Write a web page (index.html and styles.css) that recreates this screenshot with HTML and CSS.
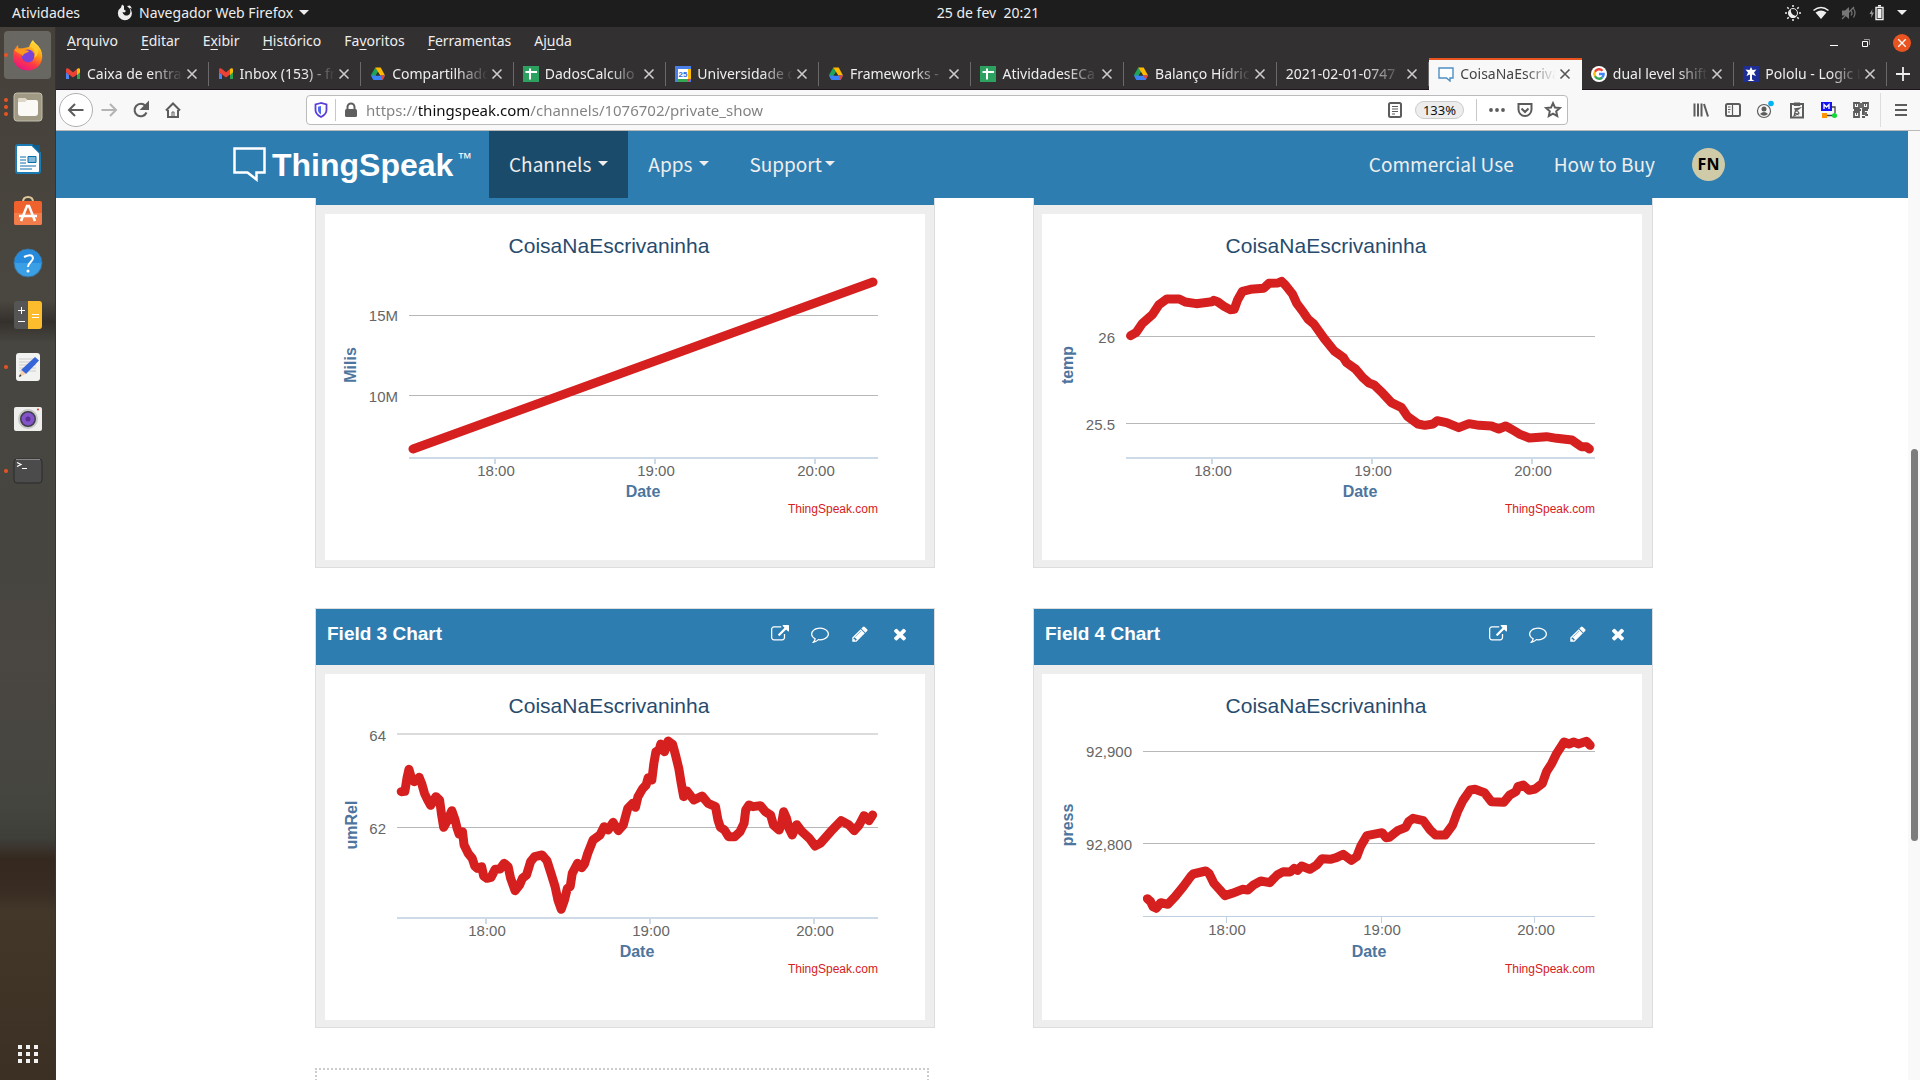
FILE: index.html
```html
<!DOCTYPE html>
<html lang="pt-BR">
<head>
<meta charset="utf-8">
<title>CoisaNaEscrivaninha - ThingSpeak IoT</title>
<link rel="stylesheet" href="styles.css">
</head>
<body>
<svg class="sprite" aria-hidden="true">
  <symbol id="gmail" viewBox="0 0 16 16"><path d="M1 3v10h3V6z" fill="#4d84f0"/><path d="M15 3v10h-3V6z" fill="#2fa24f"/><path d="M1 3.500 4 6v3L1 6z" fill="#c5221f"/><path d="M15 3.500 12 6v3l3-3z" fill="#fbbc04"/><path d="M1 3.500C1 2 3 1.800 4 3l4 3.200L12 3v5.500l-4 3-4-3L1 6z" fill="#ea4335"/><path d="M12 3c1-1.200 3-1 3 .6V6l-3 2.500z" fill="#fbbc04"/></symbol>
  <symbol id="drive" viewBox="0 0 16 16"><path d="M5.300 1.500 1 9l2.200 4.500L8 6z" fill="#1ea55b"/><path d="M5.300 1.500h5.400L15 9.500h-5z" fill="#ffba00"/><path d="M1 9.500h14l-2.400 4.500H3.300z" fill="#3b82f6"/><path d="M10.500 9.500H15l-2.400 4.500z" fill="#ea4335"/><path d="M8 6l2.200 3.500H5.800z" fill="#323031"/></symbol>
  <symbol id="sheet" viewBox="0 0 16 16"><path d="M0 0h16v16H0z" fill="#2da160"/><path d="M7 2.500v11M2.500 6H14" stroke="#fff" stroke-width="2"/></symbol>
  <symbol id="close" viewBox="0 0 12 12"><path d="M1.500 1.500l9 9m0-9l-9 9" stroke="currentColor" stroke-width="1.600" fill="none"/></symbol>
  <symbol id="external" viewBox="0 0 1792 1792"><path fill="currentColor" d="M1408 928v320q0 119-84.500 203.500t-203.500 84.500h-832q-119 0-203.500-84.500t-84.500-203.500v-832q0-119 84.500-203.500t203.500-84.500h704q14 0 23 9t9 23v64q0 14-9 23t-23 9h-704q-66 0-113 47t-47 113v832q0 66 47 113t113 47h832q66 0 113-47t47-113v-320q0-14 9-23t23-9h64q14 0 23 9t9 23zm384-864v512q0 26-19 45t-45 19-45-19l-176-176-652 652q-10 10-23 10t-23-10l-114-114q-10-10-10-23t10-23l652-652-176-176q-19-19-19-45t19-45 45-19h512q26 0 45 19t19 45z"/></symbol>
  <symbol id="comment" viewBox="0 0 1792 1792"><path fill="currentColor" d="M896 384q-204 0-381.500 69.500t-282 187.500-104.500 255q0 112 71.500 213.500t201.500 175.500l87 50-27 96q-24 91-70 172 152-63 275-171l43-38 57 6q69 8 130 8 204 0 381.500-69.500t282-187.500 104.500-255-104.500-255-282-187.500-381.500-69.500zm896 512q0 174-120 321.500t-326 233-450 85.500q-70 0-145-8-198 175-460 242-49 14-114 22h-5q-15 0-27-10.500t-16-27.500v-1q-3-4-.5-12t2-10 4.500-9.500l6-9 7-8.500 8-9q7-8 31-34.500t34.500-38 31-39.500 32.500-51 27-59 26-76q-157-89-247.500-220t-90.500-281q0-130 71-248.500t191-204.500 286-136.500 348-50.500q244 0 450 85.500t326 233 120 321.500z"/></symbol>
  <symbol id="pencil" viewBox="0 0 1792 1792"><path fill="currentColor" d="M491 1536l91-91-235-235-91 91v107h128v128h107zm523-928q0-22-22-22-10 0-17 7l-542 542q-7 7-7 17 0 22 22 22 10 0 17-7l542-542q7-7 7-17zm-54-192l416 416-832 832h-416v-416zm683 96q0 53-37 90l-166 166-416-416 166-165q36-38 90-38 53 0 91 38l235 234q37 39 37 91z"/></symbol>
  <symbol id="times" viewBox="0 0 1792 1792"><path fill="currentColor" d="M1490 1322q0 40-28 68l-136 136q-28 28-68 28t-68-28l-294-294-294 294q-28 28-68 28t-68-28l-136-136q-28-28-28-68t28-68l294-294-294-294q-28-28-28-68t28-68l136-136q28-28 68-28t68 28l294 294 294-294q28-28 68-28t68 28l136 136q28 28 28 68t-28 68l-294 294 294 294q28 28 28 68z"/></symbol>
</svg>

<header class="topbar">
  <div class="topbar-left">
    <button class="plain">Atividades</button>
    <button class="plain app-menu">
      <svg width="16" height="18" viewBox="0 0 16 18"><path d="M4 3.500A7 7 0 1 0 12.500 4l2.500.5-2-3-3 .5 1.500 1.500c2.500 2 2.500 6 0 7.500a4 4 0 0 1-6-3l2 .500 1.500-1.500-2-1.500L7 2 5 .5z" fill="#eee"/></svg>
      <span>Navegador Web Firefox</span><i class="caret"></i>
    </button>
  </div>
  <time class="clock">25 de fev&nbsp; 20:21</time>
  <div class="tray">
    <svg width="16" height="16" viewBox="0 0 16 16" stroke="#eee" stroke-width="1.500"><path d="M8 0v2M8 14v2M0 8h2M14 8h2M2.300 2.300l1.400 1.400M12.300 12.300l1.400 1.400M2.300 13.700l1.400-1.400M12.300 3.700l1.400-1.400"/><circle cx="8" cy="8" r="4.500" fill="none" stroke-width="1"/><path d="M6 4.500a5 5 0 0 0 6 6A4.500 4.500 0 1 1 6 4.500z" fill="#eee" stroke="none"/></svg>
    <svg width="16" height="16" viewBox="0 0 16 16"><path d="M.5 5.500Q8-.5 15.500 5.500" fill="none" stroke="#eee" stroke-width="1.600"/><path d="M2.500 7.500Q8 3.500 13.500 7.500L8 14z" fill="#eee"/></svg>
    <svg width="16" height="16" viewBox="0 0 16 16"><path d="M1 5.500h3L8 2v12l-4-3.500H1z" fill="#777"/><path d="M1 14 13 2M10 5.500q2 2.500 0 5M12.500 3.500q3 4.500 0 9" stroke="#777" fill="none" stroke-width="1.200"/></svg>
    <svg width="16" height="16" viewBox="0 0 16 16"><path d="M3.500 4 .5 9h2l-.5 4L5 7.500H3z" fill="#999"/><path d="M7 2.500h7v12H7zM9 .8h3" fill="none" stroke="#eee" stroke-width="1.400"/><path d="M8.500 4h4v9h-4z" fill="#eee"/></svg>
    <i class="caret"></i>
  </div>
</header>

<div class="desktop">
  <nav class="dock" aria-label="Dock">
    <button class="dock-item active" aria-label="Firefox"><i class="dots"><b></b></i>
      <svg width="32" height="32" viewBox="0 0 32 32"><defs><linearGradient id="fx" x1=".8" y1="0" x2=".3" y2="1"><stop offset="0" stop-color="#fff44f"/><stop offset=".4" stop-color="#ff980e"/><stop offset=".7" stop-color="#ff3647"/><stop offset="1" stop-color="#e31587"/></linearGradient></defs><path d="M21 1c1 3 5 4 8 10 4 10-2 20-12 20.500C8 32 1 26 1 17c0-5 2-8 5-11l.5 4L12 9l5-1c1-3 2-5 4-7z" fill="url(#fx)"/><circle cx="16" cy="17" r="6.500" fill="#7a42d8"/><path d="M2 11c5-4 9 0 15 1-2 3-5 1-6 5-4-3-5-3-9-6z" fill="#ff9a1f"/><path d="M18 7c5 3 6 8 4 12 4-2 5-7 3-11-2-3-5-3-7-1z" fill="#ffcb2e"/></svg></button>
    <button class="dock-item" aria-label="Arquivos"><i class="dots"><b></b><b></b><b></b></i>
      <svg width="30" height="30" viewBox="0 0 30 30"><rect x="1" y="1" width="28" height="28" rx="3" fill="#a09a85" stroke="#c3beac"/><path d="M5 8q0-2 2-2h5l2 2h9q2 0 2 2v11q0 3-3 3H8q-3 0-3-3z" fill="#fbf9f6"/><path d="M5 8q0-2 2-2h5l2 2-2 2H5z" fill="#ddd6c6"/></svg></button>
    <button class="dock-item" aria-label="LibreOffice Writer">
      <svg width="26" height="30" viewBox="0 0 26 30"><path d="M3 1h14l8 8v18q0 2-2 2H3q-2 0-2-2V3q0-2 2-2z" fill="#fff" stroke="#1b7cb3" stroke-width="2"/><path d="M17 1h8v8z" fill="#0e5f90"/><path d="M5 13h6M5 16h6M5 19h6M5 22h16M5 25h12" stroke="#0a6fa8"/><path d="M13 12.500h8v6h-8z" fill="#7fb8d8" stroke="#0a6fa8"/></svg></button>
    <button class="dock-item" aria-label="Ubuntu Software">
      <svg width="30" height="30" viewBox="0 0 30 30"><path d="M10 6q0-5 5-5t5 5" fill="none" stroke="#e0c69a" stroke-width="2"/><rect x="1" y="5" width="28" height="24" rx="2" fill="#f0622d"/><path d="M1 17h28v10q0 2-2 2H3q-2 0-2-2z" fill="#f37c4b"/><path d="M8 25l6-15h2l6 15M6 20h18" fill="none" stroke="#fff" stroke-width="2.500"/></svg></button>
    <button class="dock-item" aria-label="Ajuda">
      <svg width="30" height="30" viewBox="0 0 30 30"><circle cx="15" cy="15" r="14" fill="#3b9fe6" stroke="#3a6c91"/><path d="M1.500 15a13.500 13.500 0 0 1 27 0z" fill="#268bdc"/><path d="M11 9q8-4 9 1c0 4-5 4-5 9" fill="none" stroke="#fff" stroke-width="2"/><circle cx="15" cy="23" r="1.500" fill="#fff"/></svg></button>
    <button class="dock-item" aria-label="Calculadora">
      <svg width="30" height="30" viewBox="0 0 30 30"><rect x="1" y="1" width="28" height="28" rx="3" fill="#555"/><path d="M15 1h11q3 0 3 3v22q0 3-3 3H15z" fill="#fdbc2c"/><path d="M5 10.500h7M8.500 7v7M5 21.500h7M19 14.500h7M19 17.500h7" stroke="#fff"/></svg></button>
    <button class="dock-item" aria-label="Editor de texto"><i class="dots"><b></b></i>
      <svg width="28" height="30" viewBox="0 0 28 30"><rect x="2" y="1" width="24" height="28" rx="3" fill="#f2f2f0"/><path d="M5 7h17M5 10h17M5 13h17M5 16h17M5 19h17" stroke="#ccc"/><path d="M21 5l4 3.500L12 22l-5-4z" fill="#3565d8"/><path d="M7.500 18 12 22l-7 3z" fill="#f6cfae"/><path d="M5 25l2.500-1L6 22z" fill="#333"/></svg></button>
    <button class="dock-item" aria-label="Câmera">
      <svg width="30" height="26" viewBox="0 0 30 26"><rect x="1" y="1" width="28" height="24" rx="2" fill="#eeeeec"/><circle cx="15" cy="13" r="9" fill="#3e3e4a" stroke="#c8c8c8" stroke-width="2"/><circle cx="15" cy="13" r="6.500" fill="#8254c8"/><circle cx="15" cy="13" r="2.500" fill="#5c2f97"/><circle cx="25" cy="3.500" r="1" fill="#d33"/></svg></button>
    <button class="dock-item" aria-label="Terminal"><i class="dots"><b></b></i>
      <svg width="30" height="26" viewBox="0 0 30 26"><rect x="1" y="1" width="28" height="24" rx="3" fill="#4b4b4b" stroke="#2b2b2b"/><path d="M3 1.500h24" stroke="#888"/><path d="M4 4.500l4 2-4 2M9 10.500h5" fill="none" stroke="#fff" stroke-width="1.200"/></svg></button>
    <button class="dock-item apps" aria-label="Mostrar aplicativos">
      <svg width="22" height="22" viewBox="0 0 22 22" fill="#f2f2f2"><path d="M1 2h4v4H1zM9 2h4v4H9zM17 2h4v4h-4zM1 9h4v4H1zM9 9h4v4H9zM17 9h4v4h-4zM1 16h4v4H1zM9 16h4v4H9zM17 16h4v4h-4z"/></svg></button>
  </nav>

  <div class="window">
    <div class="menubar">
      <nav class="menus">
        <button class="plain"><u>A</u>rquivo</button><button class="plain"><u>E</u>ditar</button><button class="plain">E<u>x</u>ibir</button><button class="plain"><u>H</u>istórico</button><button class="plain">Fa<u>v</u>oritos</button><button class="plain"><u>F</u>erramentas</button><button class="plain">Aj<u>u</u>da</button>
      </nav>
      <div class="win-buttons">
        <button class="plain" aria-label="Minimizar"><svg width="10" height="10" viewBox="0 0 10 10"><path d="M1 7.500h8" stroke="#fff"/></svg></button>
        <button class="plain" aria-label="Restaurar"><svg width="10" height="10" viewBox="0 0 10 10"><path d="M1.500 3.500h5v5h-5z" fill="none" stroke="#fff"/><path d="M3 1.500h5.500V7" fill="none" stroke="#999"/></svg></button>
        <button class="plain win-close" aria-label="Fechar"><svg width="10" height="10"><use href="#close"/></svg></button>
      </div>
    </div>

    <div class="tabs">
      <div class="tab"><svg class="fav"><use href="#gmail"/></svg><a href="#">Caixa de entrada</a><button class="tab-x" aria-label="Fechar aba"><svg><use href="#close"/></svg></button></div>
      <div class="tab"><svg class="fav"><use href="#gmail"/></svg><a href="#">Inbox (153) - fn</a><button class="tab-x" aria-label="Fechar aba"><svg><use href="#close"/></svg></button></div>
      <div class="tab"><svg class="fav"><use href="#drive"/></svg><a href="#">Compartilhados</a><button class="tab-x" aria-label="Fechar aba"><svg><use href="#close"/></svg></button></div>
      <div class="tab"><svg class="fav"><use href="#sheet"/></svg><a href="#">DadosCalculo</a><button class="tab-x" aria-label="Fechar aba"><svg><use href="#close"/></svg></button></div>
      <div class="tab"><svg class="fav" viewBox="0 0 16 16"><path d="M0 0h16v16H0z" fill="#4a7fe8"/><path d="M13 3h3v10h-3z" fill="#fbbc04"/><path d="M3 13h10v3H3z" fill="#34a853"/><path d="M13 13h3l-3 3z" fill="#ea4335"/><path d="M3 3h10v10H3z" fill="#fff"/><text x="8" y="11" class="fav-day">25</text></svg><a href="#">Universidade d</a><button class="tab-x" aria-label="Fechar aba"><svg><use href="#close"/></svg></button></div>
      <div class="tab"><svg class="fav"><use href="#drive"/></svg><a href="#">Frameworks - </a><button class="tab-x" aria-label="Fechar aba"><svg><use href="#close"/></svg></button></div>
      <div class="tab"><svg class="fav"><use href="#sheet"/></svg><a href="#">AtividadesECa</a><button class="tab-x" aria-label="Fechar aba"><svg><use href="#close"/></svg></button></div>
      <div class="tab"><svg class="fav"><use href="#drive"/></svg><a href="#">Balanço Hídrico</a><button class="tab-x" aria-label="Fechar aba"><svg><use href="#close"/></svg></button></div>
      <div class="tab"><a href="#">2021-02-01-0747</a><button class="tab-x" aria-label="Fechar aba"><svg><use href="#close"/></svg></button></div>
      <div class="tab current"><svg class="fav" viewBox="0 0 16 16"><path d="M1 2h14v10h-3v3L8.500 12H1z" fill="#fff" stroke="#4f8fc4" stroke-width="1.400"/></svg><a href="#">CoisaNaEscrivaninha</a><button class="tab-x" aria-label="Fechar aba"><svg><use href="#close"/></svg></button></div>
      <div class="tab"><svg class="fav" viewBox="0 0 16 16" fill="none" stroke-width="2.400"><circle cx="8" cy="8" r="8" fill="#fff"/><path d="M11.500 4.700A4.600 4.600 0 0 0 4 5.700" stroke="#ea4335"/><path d="M4 5.700a4.600 4.600 0 0 0 0 4.600" stroke="#fbbc04"/><path d="M4 10.300a4.600 4.600 0 0 0 7.200 1.200" stroke="#34a853"/><path d="M11.200 11.500A4.600 4.600 0 0 0 12.600 8H8" stroke="#4285f4"/></svg><a href="#">dual level shifter</a><button class="tab-x" aria-label="Fechar aba"><svg><use href="#close"/></svg></button></div>
      <div class="tab"><svg class="fav" viewBox="0 0 16 16"><path d="M0 0h16v16H0z" fill="#1f2e94"/><path d="M8 1l1.500 3 4-.5-2.500 3 2 3.500-4-1.500v5l2.500 1.500h-7L7 13.500V8.500L3.500 10l1.500-3.500-2.500-3 4 .500z" fill="#fff"/></svg><a href="#">Pololu - Logic L</a><button class="tab-x" aria-label="Fechar aba"><svg><use href="#close"/></svg></button></div>
      <button class="plain new-tab" aria-label="Nova aba"><svg width="16" height="16" viewBox="0 0 16 16"><path d="M8 1v14M1 8h14" stroke="#eee" stroke-width="1.800"/></svg></button>
    </div>

    <div class="toolbar">
      <button class="tool back" aria-label="Voltar"><svg viewBox="0 0 16 16"><path d="M15.500 8H1M7 2 1 8l6 6"/></svg></button>
      <button class="tool off" aria-label="Avançar"><svg viewBox="0 0 16 16"><path d="M.5 8H15M9 2l6 6-6 6"/></svg></button>
      <button class="tool" aria-label="Recarregar"><svg viewBox="0 0 16 16"><path d="M13.500 10.500A6.200 6.200 0 1 1 12.500 4l1.500 2"/><path d="M15 1v6H9z" class="fill"/></svg></button>
      <button class="tool" aria-label="Início"><svg viewBox="0 0 16 16"><path d="M1 8.500 8 1.500l7 7M3 8v7h10V8"/><path d="M7 10h2v5H7z" stroke-width="1"/></svg></button>

      <form class="urlbar">
        <svg class="u-shield" width="16" height="16" viewBox="0 0 16 16"><path d="M8 1 2.500 2.500V8c0 3 2.500 5.500 5.500 7 3-1.500 5.500-4 5.500-7V2.500z" fill="none" stroke="#5a3fd6" stroke-width="1.800"/><path d="M8 4l-3 .8V8c0 2 1.500 3.500 3 4.500z" fill="#4f6bf0"/></svg>
        <i class="sep"></i>
        <svg class="u-lock" width="16" height="16" viewBox="0 0 16 16"><rect x="2" y="7" width="12" height="8" rx="1.500" fill="#5f5f60"/><path d="M4.500 8V5a3.500 3.500 0 0 1 7 0v3" fill="none" stroke="#5f5f60" stroke-width="2"/></svg>
        <input type="text" class="url" aria-label="Endereço" value="https://thingspeak.com/channels/1076702/private_show">
        <button type="button" class="tool" aria-label="Modo de leitura"><svg viewBox="0 0 16 16"><rect x="2" y="1" width="12" height="14" rx="1.500"/><path d="M5 4.500h6M5 7h6M5 9.500h6M5 12h3" stroke-width="1"/></svg></button>
        <button type="button" class="zoom">133%</button>
        <i class="sep"></i>
        <button type="button" class="tool" aria-label="Mais"><svg viewBox="0 0 16 16"><g class="fill" stroke="none"><circle cx="2" cy="8" r="1.900"/><circle cx="8" cy="8" r="1.900"/><circle cx="14" cy="8" r="1.900"/></g></svg></button>
        <button type="button" class="tool" aria-label="Pocket"><svg viewBox="0 0 16 16"><path d="M1.500 2h13v5.500a6.500 6.500 0 0 1-13 0zM4.500 6.500 8 10l3.500-3.500"/></svg></button>
        <button type="button" class="tool" aria-label="Favoritar"><svg viewBox="0 0 16 16"><path d="M8 1.200l2 4.400 4.800.5-3.600 3.200 1 4.800L8 11.700l-4.200 2.400 1-4.800L1.200 6.100 6 5.600z"/></svg></button>
      </form>

      <div class="tools-right">
        <button class="tool" aria-label="Biblioteca"><svg viewBox="0 0 16 16"><path d="M1.500 1.500v13M5 1.500v13M8.500 1.500v13M11 2l4 12.500"/></svg></button>
        <button class="tool" aria-label="Painéis"><svg viewBox="0 0 16 16"><rect x="1" y="2" width="14" height="12" rx="1.500"/><path d="M7.500 2v12M3 5h2.500M3 7.500h2.500M3 10h2" stroke-width="1.200"/></svg></button>
        <button class="tool" aria-label="Conta"><svg viewBox="0 0 16 16"><circle cx="7" cy="9" r="6.500" stroke-width="1.200"/><circle cx="7" cy="7" r="2.500" class="fill" stroke="none"/><path d="M3 12q4-4 8 0-4 3.500-8 0z" class="fill" stroke="none"/><circle cx="14" cy="1.500" r="2.800" fill="#00b3f4" stroke="none"/></svg></button>
        <button class="tool" aria-label="Área de transferência"><svg viewBox="0 0 16 16"><rect x="2" y="2" width="12" height="13.500"/><path d="M5 1h6v2.500H5z" class="fill" stroke-width="1"/><path d="M5 7l6-1-5 4 1-3 3 4-5 3 1-3 4 2" stroke-width="1.200"/></svg></button>
        <button class="tool" aria-label="Extensão M"><svg viewBox="0 0 16 16"><path d="M0 0h11v9H0z" fill="#1414f0" stroke="none"/><path d="M3 7V2.500L5.500 5 8 2.500V7" stroke="#fff" stroke-width="1.300"/><path d="M11 5h3v6M6 13.500h7" stroke="#444" stroke-width="1.300"/><path d="M1 11h5v5H1z" fill="#ff9500" stroke="none"/><circle cx="13.500" cy="13.500" r="2.500" fill="#12d834" stroke="none"/></svg></button>
        <button class="tool" aria-label="QR code"><svg viewBox="0 0 16 16"><path d="M1 1h5v5H1zM10 1h5v5h-5zM1 10h5v5H1zM8 1v5M8 8H1M9 8h6M9 10h2v2H9M13 10v3h2M9 15h3M3 3h1M12 3h1M3 12h1" stroke-width="1.800"/></svg></button>
        <i class="sep tall"></i>
        <button class="tool" aria-label="Menu"><svg viewBox="0 0 16 16"><path d="M2 3h12M2 8h12M2 13h12"/></svg></button>
      </div>
    </div>

    <div class="page">
      <div class="viewport">
        <header class="navbar">
          <div class="container nav-row">
            <a class="brand" href="#" aria-label="ThingSpeak">
              <svg width="33" height="35" viewBox="0 0 33 35"><path d="M1.500 1.500h30v24h-8v7l-9-7h-13z" fill="none" stroke="#fff" stroke-width="2.500"/></svg>
              <span>ThingSpeak</span><sup>™</sup>
            </a>
            <nav class="links">
              <a href="#" class="on">Channels <i class="caret"></i></a>
              <a href="#">Apps <i class="caret"></i></a>
              <a href="#" class="tight">Support<i class="caret"></i></a>
            </nav>
            <nav class="links right">
              <a href="#">Commercial Use</a>
              <a href="#">How to Buy</a>
            </nav>
            <button class="avatar">FN</button>
          </div>
        </header>

        <main class="container grid">
          <section class="panel">
            <header><h2></h2></header>
            <div class="body">
              <svg class="chart" viewBox="0 0 600 346" role="img" aria-label="Milis">
                <path class="gridline" d="M84 101.500h469M84 181.500h469"/>
                <path class="axis" d="M84 244h469M170 244v6M330 244v6M490 244v6"/>
                <path class="series" d="M88 235 548 68"/>
                <text class="title" x="284" y="39">CoisaNaEscrivaninha</text>
                <g class="ylab"><text x="73" y="107">15M</text><text x="73" y="188">10M</text></g>
                <g class="xlab"><text x="171" y="262">18:00</text><text x="331" y="262">19:00</text><text x="491" y="262">20:00</text></g>
                <text class="name" x="318" y="283">Date</text>
                <text class="name" transform="translate(31 151) rotate(-90)">Milis</text>
                <text class="credit" x="553" y="299">ThingSpeak.com</text>
              </svg>
            </div>
          </section>

          <section class="panel">
            <header><h2></h2></header>
            <div class="body">
              <svg class="chart" viewBox="0 0 600 346" role="img" aria-label="temp">
                <path class="gridline" d="M84 122.500h469M84 209.500h469"/>
                <path class="axis" d="M84 244h469M170 244v6M330 244v6M490 244v6"/>
                <polyline class="series" transform="translate(-22 -24) scale(.40816 .33333)" points="271,437 285,427 300,400 325,373 340,345 360,327 390,327 405,336 432,341 470,335 475,331 485,336 500,349 515,359 525,358 533,330 545,304 565,298 597,295 610,280 632,279 641,274 650,285 668,313 678,340 695,368 706,388 720,402 745,445 770,483 792,502 800,518 822,537 840,563 855,579 868,585 885,605 910,638 935,653 950,680 975,702 992,706 1012,702 1022,692 1045,698 1075,713 1100,701 1125,706 1155,708 1173,717 1190,708 1210,722 1225,733 1248,744 1290,740 1315,745 1352,750 1375,770 1388,770 1395,777"/>
                <text class="title" x="284" y="39">CoisaNaEscrivaninha</text>
                <g class="ylab"><text x="73" y="129">26</text><text x="73" y="216">25.5</text></g>
                <g class="xlab"><text x="171" y="262">18:00</text><text x="331" y="262">19:00</text><text x="491" y="262">20:00</text></g>
                <text class="name" x="318" y="283">Date</text>
                <text class="name" transform="translate(31 151) rotate(-90)">temp</text>
                <text class="credit" x="553" y="299">ThingSpeak.com</text>
              </svg>
            </div>
          </section>

          <section class="panel">
            <header><h2>Field 3 Chart</h2>
              <div class="actions"><button aria-label="Abrir"><svg><use href="#external"/></svg></button><button aria-label="Comentar"><svg><use href="#comment"/></svg></button><button aria-label="Editar"><svg><use href="#pencil"/></svg></button><button aria-label="Remover"><svg><use href="#times"/></svg></button></div>
            </header>
            <div class="body">
              <svg class="chart" viewBox="0 0 600 346" role="img" aria-label="umRel">
                <path class="gridline" d="M72 60h481M72 153.500h481"/>
                <path class="axis" d="M72 244h481M161 244v6M325 244v6M489 244v6"/>
                <polyline class="series" transform="translate(-25 -84) scale(.40816 .33333)" points="248,605 257,604 262,565 267,538 272,560 280,575 292,562 298,580 305,610 312,628 320,646 333,620 342,630 347,675 352,712 362,690 372,662 380,690 385,715 390,733 398,725 402,765 412,790 422,805 428,828 434,835 445,830 450,858 458,865 468,862 478,838 490,837 500,820 510,830 516,865 527,902 538,885 545,865 555,855 565,815 575,800 593,795 605,812 615,850 625,890 632,930 640,958 648,930 655,895 662,890 667,850 680,820 690,833 697,822 705,790 718,750 735,735 745,710 755,720 767,697 780,722 792,705 803,655 815,640 822,652 828,620 840,595 848,585 853,563 862,570 867,520 872,485 880,480 884,462 893,485 902,453 913,463 920,495 928,535 934,580 940,620 948,603 965,630 985,618 1000,640 1018,650 1024,690 1030,712 1040,720 1050,740 1065,740 1078,725 1088,700 1092,660 1100,645 1110,650 1128,647 1140,665 1153,675 1160,705 1174,720 1180,700 1185,665 1192,685 1198,715 1206,735 1217,704 1230,725 1248,745 1262,768 1275,760 1300,725 1326,692 1345,705 1358,722 1370,705 1382,677 1394,692 1403,675"/>
                <text class="title" x="284" y="39">CoisaNaEscrivaninha</text>
                <g class="ylab"><text x="61" y="67">64</text><text x="61" y="160">62</text></g>
                <g class="xlab"><text x="162" y="262">18:00</text><text x="326" y="262">19:00</text><text x="490" y="262">20:00</text></g>
                <text class="name" x="312" y="283">Date</text>
                <text class="name" transform="translate(32 151) rotate(-90)">umRel</text>
                <text class="credit" x="553" y="299">ThingSpeak.com</text>
              </svg>
            </div>
          </section>

          <section class="panel">
            <header><h2>Field 4 Chart</h2>
              <div class="actions"><button aria-label="Abrir"><svg><use href="#external"/></svg></button><button aria-label="Comentar"><svg><use href="#comment"/></svg></button><button aria-label="Editar"><svg><use href="#pencil"/></svg></button><button aria-label="Remover"><svg><use href="#times"/></svg></button></div>
            </header>
            <div class="body">
              <svg class="chart" viewBox="0 0 600 346" role="img" aria-label="press">
                <path class="gridline" d="M101 77.500h452M101 169.500h452"/>
                <path class="axis thin" d="M101 242.500h452M184.500 243v6M339.500 243v6M492.500 243v6"/>
                <polyline class="series" transform="translate(-22 -84) scale(.40816 .33333)" points="312,926 320,935 326,950 334,955 345,938 362,943 380,920 400,890 418,860 424,852 455,843 463,850 475,880 490,900 502,917 520,910 545,898 558,900 572,885 590,873 612,878 630,855 645,845 662,846 672,835 680,841 690,828 710,838 727,825 740,806 760,808 775,803 792,793 812,811 825,800 835,768 850,737 887,728 897,743 905,742 925,722 945,712 952,695 963,685 988,692 1005,720 1018,735 1042,735 1060,705 1072,665 1085,632 1103,600 1115,598 1138,608 1155,635 1185,637 1200,615 1215,605 1220,590 1233,585 1247,601 1262,597 1280,580 1290,545 1303,520 1315,490 1333,456 1345,462 1357,456 1368,462 1388,454 1397,466"/>
                <text class="title" x="284" y="39">CoisaNaEscrivaninha</text>
                <g class="ylab"><text x="90" y="83">92,900</text><text x="90" y="176">92,800</text></g>
                <g class="xlab"><text x="185" y="261">18:00</text><text x="340" y="261">19:00</text><text x="494" y="261">20:00</text></g>
                <text class="name" x="327" y="283">Date</text>
                <text class="name" transform="translate(31 151) rotate(-90)">press</text>
                <text class="credit" x="553" y="299">ThingSpeak.com</text>
              </svg>
            </div>
          </section>

          <div class="dropzone"></div>
        </main>
      </div>
      <div class="scrollbar"><i class="before"></i><i class="thumb"></i><i class="after"></i></div>
    </div>
  </div>
</div>
</body>
</html>
```
FILE: styles.css
```css
* { box-sizing: border-box; }
body {
  margin: 0;
  height: 100vh;
  display: flex;
  flex-direction: column;
  overflow: hidden;
  font: 14px/20px "Noto Sans", "Open Sans", sans-serif;
  color: #eee;
  background: #fff;
}
.sprite { display: none; }
button { font: inherit; color: inherit; background: none; border: 0; padding: 0; }
a { color: inherit; text-decoration: none; }
svg { display: block; flex: none; }
.caret {
  display: inline-block;
  border: 5px solid transparent;
  border-top-color: currentColor;
  border-bottom: 0;
}

/* Desktop top bar */
.topbar {
  flex: none;
  display: grid;
  grid-template-columns: 1fr auto 1fr;
  align-items: center;
  height: 27px;
  padding: 0 13px 2px 12px;
  background: #1d1d1d;
}
.topbar-left { display: flex; gap: 37px; }
.app-menu { display: flex; align-items: center; gap: 6px; }
.clock { padding-left: 57px; }
.tray { display: flex; justify-content: flex-end; align-items: center; gap: 12px; }

/* Dock */
.desktop { flex: 1; min-height: 0; display: flex; }
.dock {
  flex: none;
  width: 56px;
  display: flex;
  flex-direction: column;
  gap: 4px;
  padding: 4px 4px 2px;
  border-right: 1px solid #353430;
  background: linear-gradient(#45413a 0, #4a4740 26%, #34312d 28%, #484640 30%, #464540 50%, #4a4641 60%, #45453f 74%, #3f3f3a 77%, #35291f 79%, #382c23 82%, #43372a 84%, #3c3024 100%);
}
.dock-item {
  position: relative;
  height: 48px;
  display: flex;
  align-items: center;
  justify-content: center;
}
.dock-item.active { background: #686761; border-radius: 4px; }
.dock-item.apps { margin-top: auto; }
.dots {
  position: absolute;
  left: 0;
  top: 0;
  bottom: 0;
  display: flex;
  flex-direction: column;
  justify-content: center;
  gap: 3px;
}
.dots b { width: 4px; height: 4px; border-radius: 50%; background: #e95420; }

/* Browser window */
.window { flex: 1; min-width: 0; display: flex; flex-direction: column; }
.menubar {
  display: flex;
  justify-content: space-between;
  align-items: center;
  height: 31px;
  padding: 0 9px 0 11px;
  background: #323031;
}
.menus { display: flex; gap: 23px; padding-bottom: 4px; }
.menus u { text-underline-offset: 3px; }
.win-buttons { display: flex; align-items: center; gap: 22px; }
.win-close {
  width: 18px;
  height: 18px;
  border-radius: 50%;
  background: #e95420;
  display: flex;
  align-items: center;
  justify-content: center;
  color: #fff;
}
.tabs {
  display: flex;
  height: 32px;
  background: #323031;
  border-bottom: 1px solid #1e1420;
}
.tab {
  flex: 1 1 0;
  min-width: 0;
  display: flex;
  align-items: center;
  padding: 0 11px 0 9px;
  background: linear-gradient(#6b696a, #6b696a) right 4px / 1px 24px no-repeat;
}
.tab a {
  flex: 1;
  min-width: 0;
  overflow: hidden;
  white-space: nowrap;
  -webkit-mask-image: linear-gradient(90deg, #000 68%, transparent 100%);
  mask-image: linear-gradient(90deg, #000 68%, transparent 100%);
}
.tab-x { margin-left: 3px; color: #ccc; }
.tab-x svg { width: 12px; height: 12px; }
.fav { width: 16px; height: 16px; margin-right: 6px; }
.fav-day { font: bold 8px "Liberation Sans", sans-serif; text-anchor: middle; fill: #3367d6; }
.tab.current {
  margin-bottom: -1px;
  padding-bottom: 3px;
  border-top: 2px solid #e95420;
  background: #f8f8f8;
  color: #444;
}
.tab.current .tab-x { color: #555; }
.new-tab { width: 33px; display: flex; align-items: center; justify-content: center; }

.toolbar {
  display: flex;
  align-items: center;
  height: 41px;
  padding: 0 3px;
  background: #f8f8f8;
  border-bottom: 1px solid #b9b9b9;
}
.tool { width: 32px; height: 32px; display: flex; align-items: center; justify-content: center; }
.tool svg { width: 16px; height: 16px; fill: none; stroke: #5c5c5d; stroke-width: 2; overflow: visible; }
.tool .fill { fill: #5c5c5d; }
.tool.off svg { stroke: #b4b4b4; }
.back { width: 34px; height: 34px; border: 1px solid #b0b0b0; border-radius: 50%; background: #fff; }
.urlbar {
  flex: 1;
  display: flex;
  align-items: center;
  height: 30px;
  margin: 0 117px;
  border: 1px solid #bbb;
  border-radius: 4px;
  background: #fff;
}
.urlbar .tool { width: 28px; height: 28px; }
.u-shield { margin: 0 6px 0 6px; }
.u-lock { margin: 0 7px; }
.sep { flex: none; width: 1px; height: 22px; background: #c8c8c8; }
.sep.tall { height: 34px; margin: 0 4px 0 3px; background: #ddd; }
.url {
  flex: 1;
  min-width: 0;
  height: 28px;
  border: 0;
  padding: 0;
  outline: 0;
  font: inherit;
  font-size: 15px;
  color: transparent;
  background: linear-gradient(90deg, #808080 53px, #0c0c0d 53px 163px, #808080 163px);
  -webkit-background-clip: text;
  background-clip: text;
}
.zoom {
  width: 49px;
  height: 18px;
  margin: 0 12px 0 6px;
  border: 1px solid #ccc;
  border-radius: 9px;
  background: #ededed;
  color: #111;
  font-size: 13px;
  line-height: 16px;
}
.urlbar .zoom + .sep { margin-right: 6px; }
.tools-right { display: flex; align-items: center; }

/* Page */
.page { flex: 1; min-height: 0; display: flex; }
.viewport { position: relative; flex: 1; min-width: 0; overflow: hidden; }
.container { width: 100%; max-width: 1498px; margin: 0 auto; }
.navbar {
  position: absolute;
  top: 0;
  left: 0;
  right: 0;
  z-index: 1;
  background: #2e7db1;
  font: 19px/28px "Noto Sans CJK SC", "Noto Sans", sans-serif;
}
.nav-row { display: flex; align-items: stretch; height: 67px; padding-right: 6px; }
.brand { display: flex; width: 256px; align-items: center; color: #fff; }
.brand span { margin-left: 6px; font: bold 32px/36px "Liberation Sans", sans-serif; }
.brand sup { align-self: flex-start; margin: 17px 0 0 4px; font: 15px/20px "Liberation Sans", sans-serif; }
.links { display: flex; }
.links a { display: flex; align-items: center; gap: 7px; padding: 0 20px 2px; }
.links a.tight { gap: 3px; }
.links a.on { background: #1b4b6b; }
.links.right { margin-left: auto; margin-right: 17px; }
.avatar {
  align-self: center;
  width: 33px;
  height: 33px;
  border-radius: 50%;
  background: #cfcba8;
  color: #000;
  font: bold 16px/33px "Noto Sans", sans-serif;
}
.grid {
  display: grid;
  grid-template-columns: 1fr 1fr;
  gap: 40px 98px;
  padding: 17px 78px 0 82px;
}
.panel { border: 1px solid #ddd; background: #eee; }
.panel > header {
  display: flex;
  align-items: center;
  justify-content: space-between;
  height: 56px;
  padding: 0 25px 6px 11px;
  background: #2e7db1;
  color: #fff;
}
.panel h2 { margin: 0; font: bold 19px/24px "Liberation Sans", sans-serif; }
.actions { display: flex; gap: 22px; }
.actions svg { width: 18px; height: 18px; }
.body { padding: 9px 9px 7px; }
.panel:nth-child(even) .body { padding: 9px 10px 7px 8px; }
.chart { width: 100%; background: #fff; font-family: "Liberation Sans", Arial, sans-serif; }
.gridline { stroke: #b8b8b8; fill: none; }
.axis { stroke: #cddae8; stroke-width: 2; fill: none; }
.axis.thin { stroke: #c0d0e0; stroke-width: 1; }
.series {
  fill: none;
  stroke: #d62020;
  stroke-width: 9;
  stroke-linecap: round;
  stroke-linejoin: round;
  vector-effect: non-scaling-stroke;
}
.title { font-size: 21px; fill: #274b6d; text-anchor: middle; }
.ylab, .xlab { font-size: 15px; fill: #666; }
.ylab { text-anchor: end; }
.xlab { text-anchor: middle; }
.name { font-size: 16px; font-weight: bold; fill: #4d759e; text-anchor: middle; }
.credit { font-size: 12px; fill: #d62020; text-anchor: end; }
.dropzone { height: 440px; margin-right: 6px; border: 2px dotted #ccc; }

.scrollbar {
  width: 12px;
  display: flex;
  flex-direction: column;
  padding: 0 2px 0 3px;
  background: #f9f9f9;
}
.before { flex: 318; }
.thumb { flex: 392; border-radius: 4px; background: #7d7d7d; }
.after { flex: 239; }
```
